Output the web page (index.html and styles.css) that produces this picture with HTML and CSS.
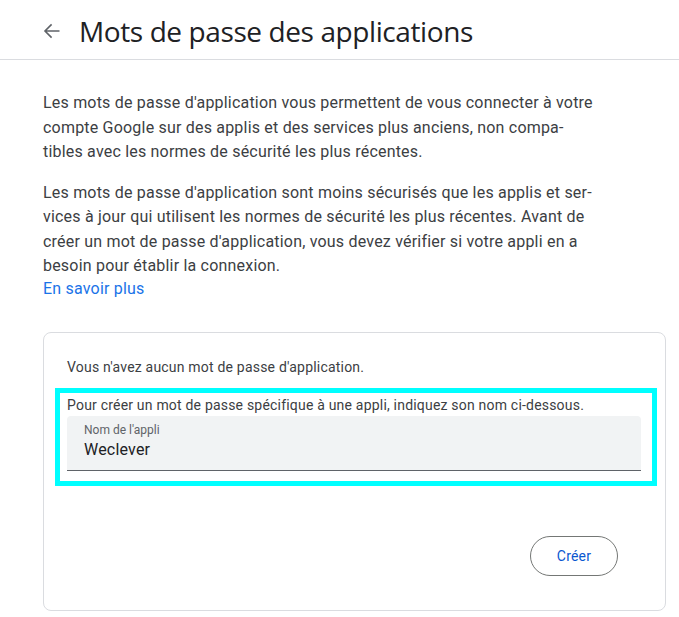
FILE: index.html
```html
<!DOCTYPE html>
<html lang="fr">
<head>
<meta charset="utf-8">
<title>Mots de passe des applications</title>
<link rel="stylesheet" href="styles.css">
</head>
<body>
<header class="topbar">
  <svg class="back" width="20" height="20" viewBox="0 0 20 20" aria-hidden="true">
    <path d="M17.5 10H3.2M9.6 3.4L3 10l6.6 6.6" fill="none" stroke="#5f6368" stroke-width="1.6"/>
  </svg>
  <h1 class="title">Mots de passe des applications</h1>
</header>
<main class="content">
  <p class="para">Les mots de passe d'application vous permettent de vous connecter à votre<br>compte Google sur des applis et des services plus anciens, non compa-<br>tibles avec les normes de sécurité les plus récentes.</p>
  <p class="para last">Les mots de passe d'application sont moins sécurisés que les applis et ser-<br>vices à jour qui utilisent les normes de sécurité les plus récentes. Avant de<br>créer un mot de passe d'application, vous devez vérifier si votre appli en a<br>besoin pour établir la connexion.</p>
  <a class="link" href="#">En savoir plus</a>
  <section class="card">
    <p class="status">Vous n'avez aucun mot de passe d'application.</p>
    <div class="highlight">
      <p class="hint">Pour créer un mot de passe spécifique à une appli, indiquez son nom ci-dessous.</p>
      <label class="field">
        <span class="field-label">Nom de l'appli</span>
        <span class="field-value">Weclever</span>
      </label>
    </div>
    <div class="actions">
      <button class="btn" type="button">Créer</button>
    </div>
  </section>
</main>
</body>
</html>
```
FILE: styles.css
```css
* { box-sizing: border-box; }
body {
  margin: 0;
  background: #fff;
  font-family: Roboto, "Noto Sans", sans-serif;
  color: #3c4043;
  letter-spacing: 0.2px;
}
.topbar {
  display: flex;
  align-items: center;
  height: 60px;
  padding: 2px 0 0 42px;
  border-bottom: 1px solid #dadce0;
}
.back { display: block; flex: none; }
.title {
  margin: 0 0 0 17px;
  font-family: "Open Sans", Roboto, sans-serif;
  font-weight: 400;
  font-size: 28px;
  letter-spacing: -0.4px;
  color: #202124;
  line-height: 36px;
}
.content {
  padding: 31px 13px 0 43px;
}
.para {
  margin: 0 0 16px;
  font-size: 16px;
  line-height: 24.5px;
  color: #3c4043;
  white-space: nowrap;
}
.para.last { margin-bottom: 0; }
.link {
  display: block;
  width: max-content;
  font-size: 16px;
  line-height: 20px;
  color: #1a73e8;
  text-decoration: none;
}
.card {
  margin-top: 33px;
  border: 1px solid #dadce0;
  border-radius: 8px;
  padding: 24px 24px 34px 23px;
}
.status, .hint {
  margin: 0;
  font-size: 14px;
  line-height: 20px;
  color: #3c4043;
}
.status { margin-bottom: 11px; }
.highlight {
  margin: 0 -16px 0 -12px;
  border: 5px solid #00ffff;
  padding: 2px 11px 10px 7px;
}
.field {
  display: flex;
  flex-direction: column;
  height: 55px;
  margin-top: 1px;
  padding: 6px 16px 0 17px;
  background: #f1f3f4;
  border-radius: 4px 4px 0 0;
  border-bottom: 1px solid #5f6368;
}
.field-label {
  font-size: 12px;
  line-height: 16px;
  color: #5f6368;
  letter-spacing: 0;
}
.field-value {
  font-size: 16px;
  line-height: 24px;
  color: #202124;
}
.actions {
  display: flex;
  justify-content: flex-end;
  margin-top: 50px;
  padding-right: 23px;
}
.btn {
  width: 88px;
  height: 40px;
  border: 1px solid #747775;
  border-radius: 20px;
  background: #fff;
  font-family: Roboto, sans-serif;
  font-size: 14px;
  font-weight: 400;
  letter-spacing: 0.2px;
  color: #0b57d0;
  padding: 0;
}
```
